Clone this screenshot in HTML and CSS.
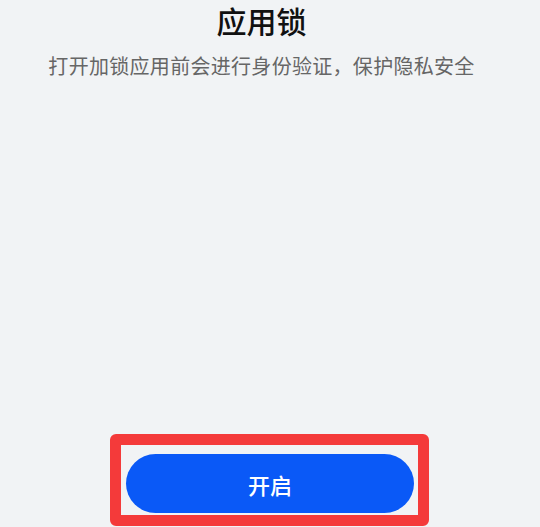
FILE: index.html
```html
<!DOCTYPE html>
<html lang="zh-CN">
<head>
<meta charset="utf-8">
<title>应用锁</title>
<link rel="stylesheet" href="styles.css">
</head>
<body>
<main class="page">
  <header class="intro">
    <h1 class="title">应用锁</h1>
    <p class="desc">打开加锁应用前会进行身份验证，保护隐私安全</p>
  </header>
  <div class="highlight">
    <button class="primary" type="button">开启</button>
  </div>
</main>
</body>
</html>
```
FILE: styles.css
```css
* { box-sizing: border-box; }
html, body { margin: 0; padding: 0; }
body {
  background: #f1f3f5;
  font-family: "Noto Sans CJK SC", "Noto Sans", sans-serif;
}
.page {
  height: 527px;
  display: flex;
  flex-direction: column;
  align-items: center;
}
.intro {
  display: flex;
  flex-direction: column;
  align-items: center;
  padding: 1px 17px 0 0;
}
.title {
  margin: 0;
  font-size: 30px;
  line-height: 38px;
  font-weight: 500;
  color: #111;
}
.desc {
  margin: 13px 0 0;
  font-size: 20px;
  line-height: 28px;
  letter-spacing: 0.3px;
  color: #666;
}
.highlight {
  margin-top: auto;
  margin-bottom: 1px;
  margin-left: -1px;
  width: 319px;
  border: 11px solid #f43a3a;
  border-radius: 6px;
  padding: 9px 4px 2px 5px;
}
.primary {
  display: block;
  width: 288px;
  height: 59px;
  border: none;
  border-radius: 30px;
  background: #0a59f7;
  color: #fff;
  font-family: inherit;
  font-size: 22px;
  font-weight: 500;
  padding: 0;
}
```
